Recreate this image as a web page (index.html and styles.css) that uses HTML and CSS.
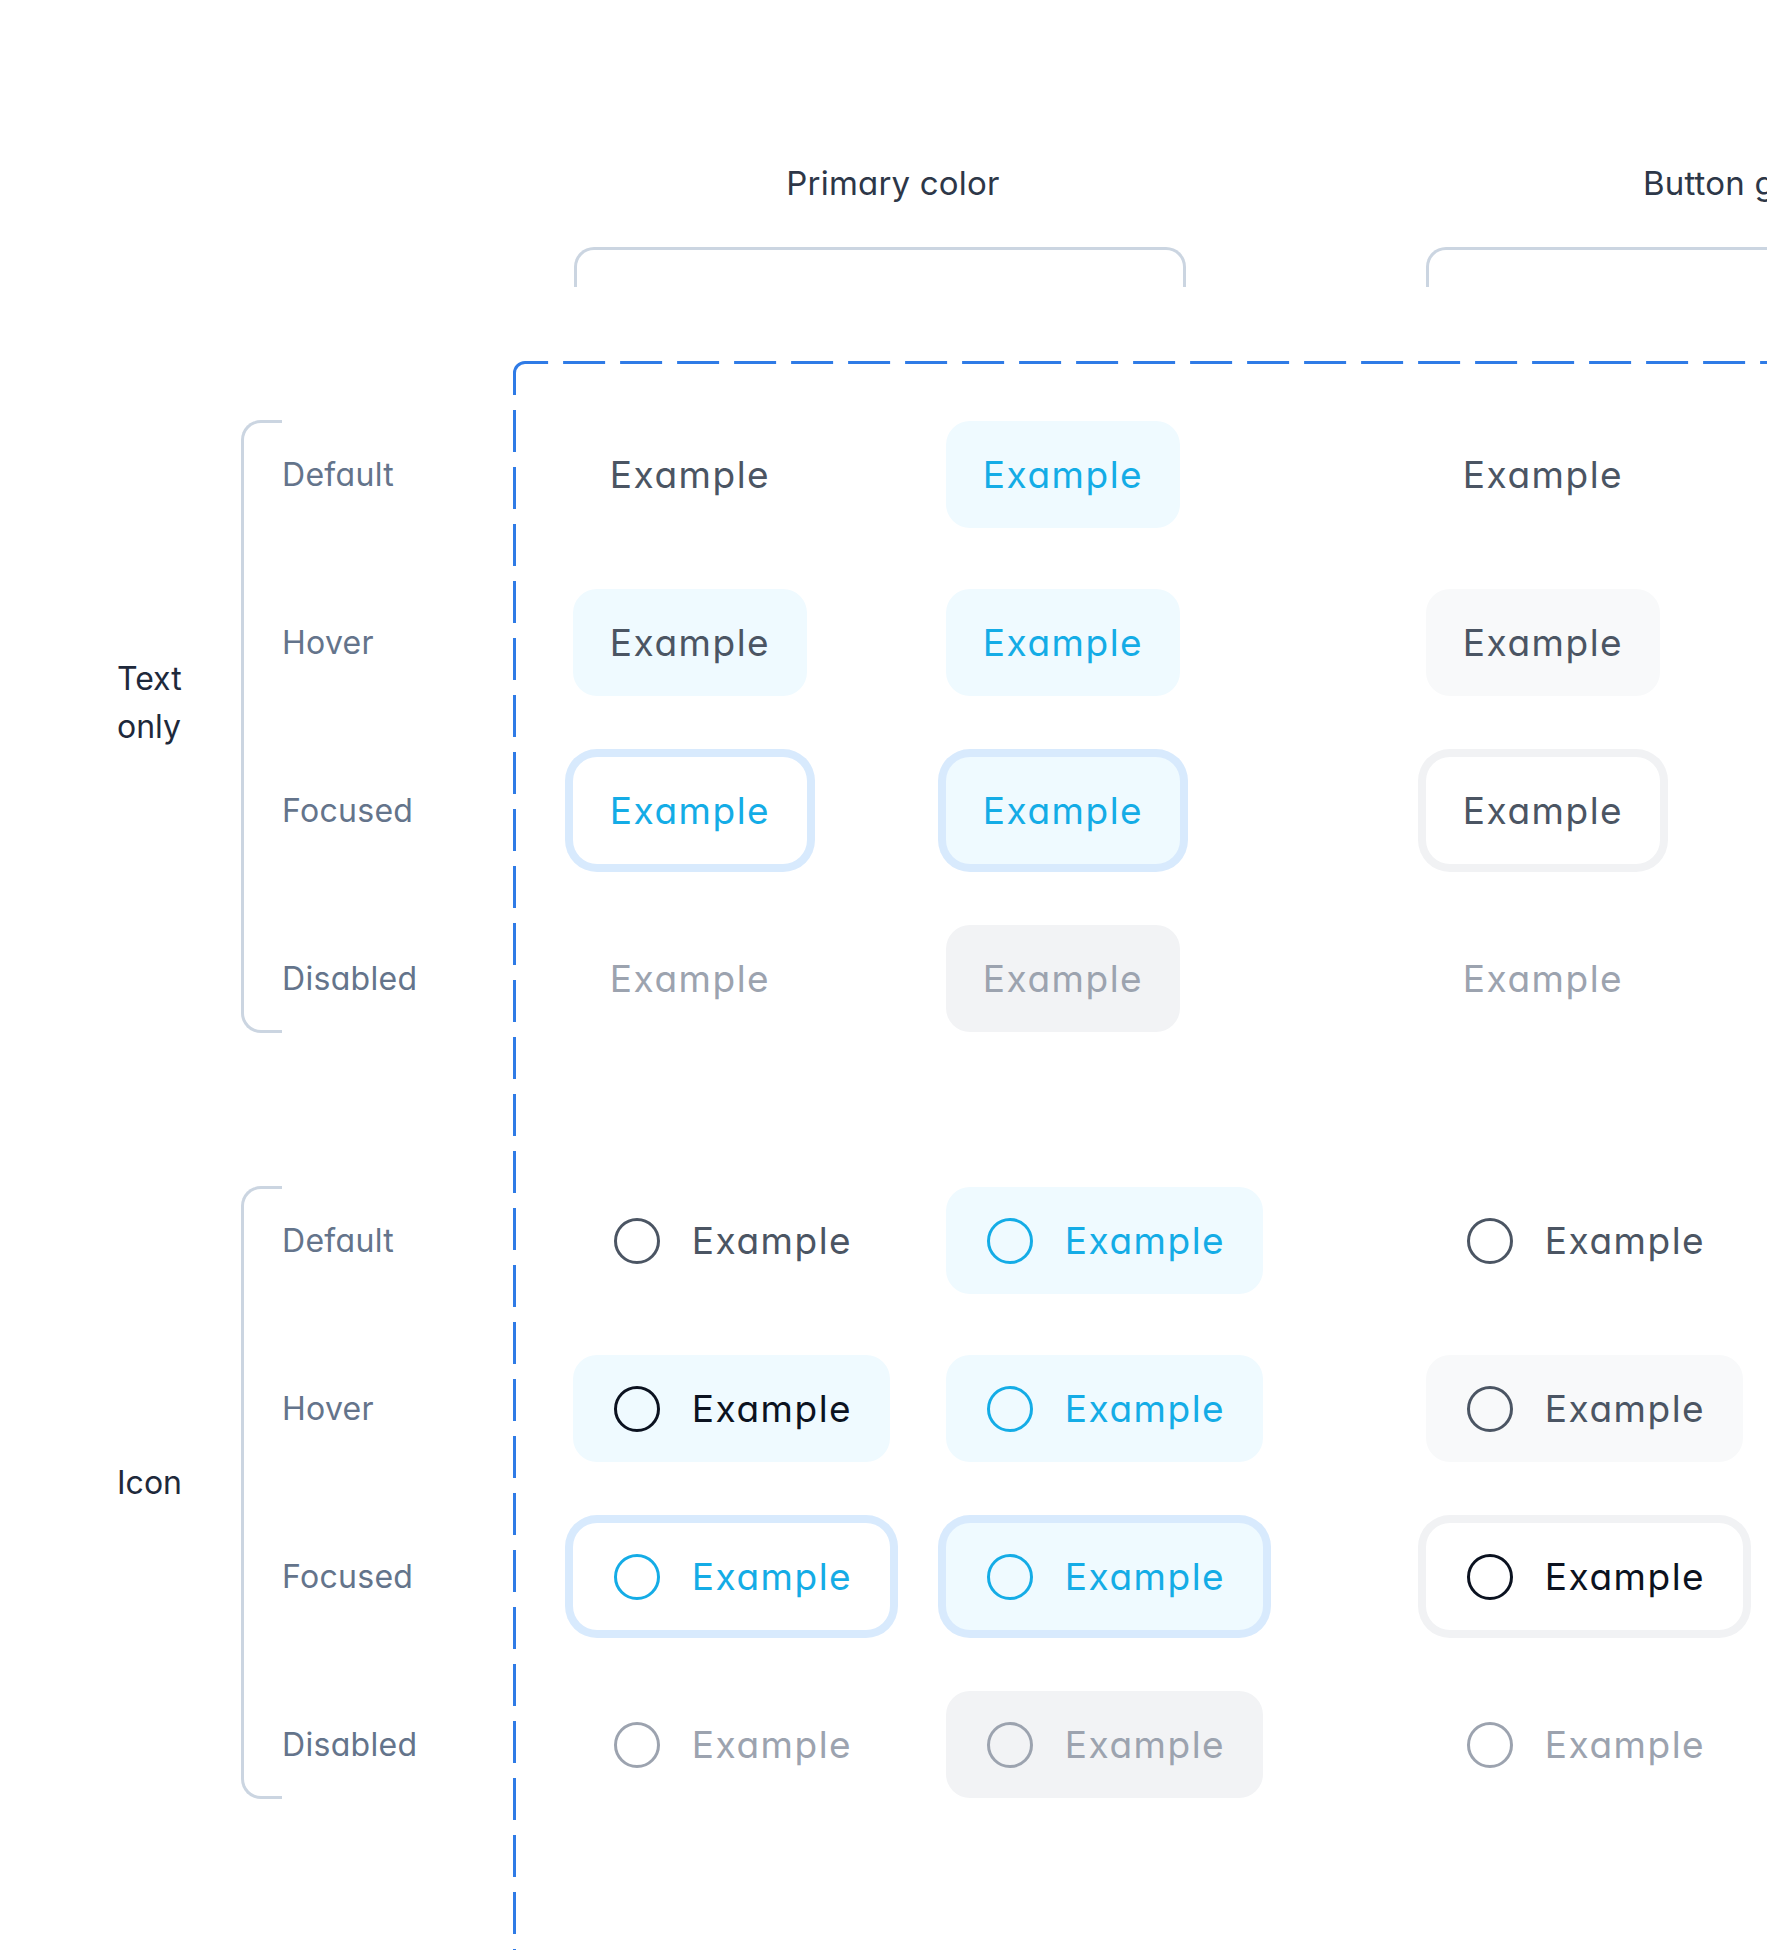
FILE: index.html
```html
<!DOCTYPE html>
<html lang="en">
<head>
<meta charset="utf-8">
<title>Button states</title>
<link rel="stylesheet" href="styles.css">
</head>
<body>
<div class="page">
  <header class="heads">
    <div class="col-head">
      <div class="col-title">Primary color</div>
      <div class="brace-top"></div>
    </div>
    <div class="col-head col-head--group">
      <div class="col-title">Button group</div>
      <div class="brace-top"></div>
    </div>
  </header>

  <div class="matrix">
    <div class="row-labels">
      <div class="group">
        <div class="group-name group-name--text">Text<br>only</div>
        <div class="brace-left"></div>
        <div class="states">
          <div class="state">Default</div>
          <div class="state">Hover</div>
          <div class="state">Focused</div>
          <div class="state">Disabled</div>
        </div>
      </div>
      <div class="group">
        <div class="group-name group-name--icon">Icon</div>
        <div class="brace-left"></div>
        <div class="states">
          <div class="state">Default</div>
          <div class="state">Hover</div>
          <div class="state">Focused</div>
          <div class="state">Disabled</div>
        </div>
      </div>
    </div>

    <div class="canvas">
      <svg class="dash-frame" width="2400" height="2000" viewBox="0 0 2400 2000" aria-hidden="true">
        <path class="dash-h" d="M1.5 12 A10.5 10.5 0 0 1 12 1.5 H2400"/>
        <path class="dash-v" d="M1.5 12 V2000"/>
      </svg>

      <section class="section">
        <div class="btn">Example</div>
        <div class="btn btn--tint">Example</div>
        <div class="btn">Example</div>

        <div class="btn btn--tint-dark">Example</div>
        <div class="btn btn--tint">Example</div>
        <div class="btn btn--gray">Example</div>

        <div class="btn btn--focus">Example</div>
        <div class="btn btn--tint btn--focus">Example</div>
        <div class="btn btn--focus-gray">Example</div>

        <div class="btn btn--disabled">Example</div>
        <div class="btn btn--disabled btn--disabled-bg">Example</div>
        <div class="btn btn--disabled">Example</div>
      </section>

      <section class="section">
        <div class="btn btn--icon"><svg class="ico" viewBox="0 0 48 48"><circle cx="24" cy="24" r="21.5"/></svg><span>Example</span></div>
        <div class="btn btn--icon btn--tint"><svg class="ico" viewBox="0 0 48 48"><circle cx="24" cy="24" r="21.5"/></svg><span>Example</span></div>
        <div class="btn btn--icon"><svg class="ico" viewBox="0 0 48 48"><circle cx="24" cy="24" r="21.5"/></svg><span>Example</span></div>

        <div class="btn btn--icon btn--tint-black"><svg class="ico" viewBox="0 0 48 48"><circle cx="24" cy="24" r="21.5"/></svg><span>Example</span></div>
        <div class="btn btn--icon btn--tint"><svg class="ico" viewBox="0 0 48 48"><circle cx="24" cy="24" r="21.5"/></svg><span>Example</span></div>
        <div class="btn btn--icon btn--gray"><svg class="ico" viewBox="0 0 48 48"><circle cx="24" cy="24" r="21.5"/></svg><span>Example</span></div>

        <div class="btn btn--icon btn--focus"><svg class="ico" viewBox="0 0 48 48"><circle cx="24" cy="24" r="21.5"/></svg><span>Example</span></div>
        <div class="btn btn--icon btn--tint btn--focus"><svg class="ico" viewBox="0 0 48 48"><circle cx="24" cy="24" r="21.5"/></svg><span>Example</span></div>
        <div class="btn btn--icon btn--focus-gray btn--black"><svg class="ico" viewBox="0 0 48 48"><circle cx="24" cy="24" r="21.5"/></svg><span>Example</span></div>

        <div class="btn btn--icon btn--disabled"><svg class="ico" viewBox="0 0 48 48"><circle cx="24" cy="24" r="21.5"/></svg><span>Example</span></div>
        <div class="btn btn--icon btn--disabled btn--disabled-bg"><svg class="ico" viewBox="0 0 48 48"><circle cx="24" cy="24" r="21.5"/></svg><span>Example</span></div>
        <div class="btn btn--icon btn--disabled"><svg class="ico" viewBox="0 0 48 48"><circle cx="24" cy="24" r="21.5"/></svg><span>Example</span></div>
      </section>
    </div>
  </div>
</div>
</body>
</html>
```

FILE: styles.css
```css
html, body {
  margin: 0;
  padding: 0;
  overflow: hidden;
  background: #ffffff;
}

body {
  font-family: "Inter", "Noto Sans", "Liberation Sans", sans-serif;
  font-feature-settings: "cv11" 1;
  -webkit-font-smoothing: antialiased;
}

.page {
  width: 2600px;
  padding-top: 163px;
}

/* ---------- column headers ---------- */
.heads {
  display: flex;
  padding-left: 574px;
}

.col-head {
  width: 612px;
  flex: none;
}

.col-head--group {
  margin-left: 240px;
}

.col-title {
  height: 40px;
  line-height: 40px;
  font-size: 33px;
  color: #2d3748;
  text-align: center;
  padding-left: 26px;
  letter-spacing: 0.2px;
}

.brace-top {
  margin-top: 44px;
  height: 40px;
  box-sizing: border-box;
  border: 3px solid #cbd5e1;
  border-bottom: 0;
  border-radius: 20px 20px 0 0;
}

/* ---------- matrix ---------- */
.matrix {
  display: flex;
  margin-top: 74px;
}

.row-labels {
  width: 513px;
  flex: none;
  padding-top: 60px;
  display: flex;
  flex-direction: column;
  gap: 155px;
}

.group {
  display: flex;
  height: 611px;
}

.group-name {
  width: 124px;
  margin-left: 117px;
  flex: none;
  align-self: center;
  font-size: 32px;
  line-height: 48px;
  color: #1e293b;
}

.group-name--text {
  margin-bottom: 48px;
}

.group-name--icon {
  margin-bottom: 20px;
}

.brace-left {
  width: 41px;
  flex: none;
  box-sizing: border-box;
  border: 3px solid #cbd5e1;
  border-right: 0;
  border-radius: 20px 0 0 20px;
  margin-top: -1px;
  margin-bottom: -1px;
}

.states {
  display: grid;
  grid-auto-rows: 107px;
  row-gap: 61px;
}

.state {
  display: flex;
  align-items: center;
  font-size: 32px;
  color: #64748b;
  letter-spacing: 0.3px;
}

/* ---------- dashed canvas ---------- */
.canvas {
  position: relative;
  flex: none;
  width: 2200px;
  padding: 60px 0 300px 60px;
}

.dash-frame {
  position: absolute;
  top: 0;
  left: 0;
  overflow: visible;
  fill: none;
  stroke: #2f7be6;
  stroke-width: 3;
  stroke-dasharray: 42 15;
}

.dash-h {
  stroke-dashoffset: 2.5;
}

.dash-v {
  stroke-dashoffset: 20;
}

.section {
  display: grid;
  grid-template-columns: 373px 480px 373px;
  grid-auto-rows: 107px;
  row-gap: 61px;
  align-items: center;
  justify-items: start;
}

.section + .section {
  margin-top: 155px;
}

/* ---------- buttons ---------- */
.btn {
  box-sizing: border-box;
  width: 234px;
  height: 107px;
  border-radius: 24px;
  display: flex;
  align-items: center;
  justify-content: center;
  font-size: 37px;
  letter-spacing: 1.5px;
  color: #4b5563;
  background: transparent;
}

.btn--icon {
  width: 317px;
  gap: 31px;
  padding-left: 2px;
}

.ico {
  width: 48px;
  height: 48px;
  flex: none;
  fill: none;
  stroke: currentColor;
  stroke-width: 3;
}

.btn--tint {
  background: #effaff;
  color: #14ace6;
}

.btn--tint-dark {
  background: #effaff;
  color: #4b5563;
}

.btn--tint-black {
  background: #effaff;
  color: #0b1220;
}

.btn--gray {
  background: #f8f9fa;
  color: #4b5563;
}

.btn--focus {
  color: #14ace6;
  box-shadow: 0 0 0 8px #d8eafd;
}

.btn--focus-gray {
  background: #ffffff;
  box-shadow: 0 0 0 8px #f1f2f4;
}

.btn--black {
  color: #0b1220;
}

.btn--disabled {
  color: #9ca3af;
}

.btn--disabled-bg {
  background: #f2f3f5;
}
```
